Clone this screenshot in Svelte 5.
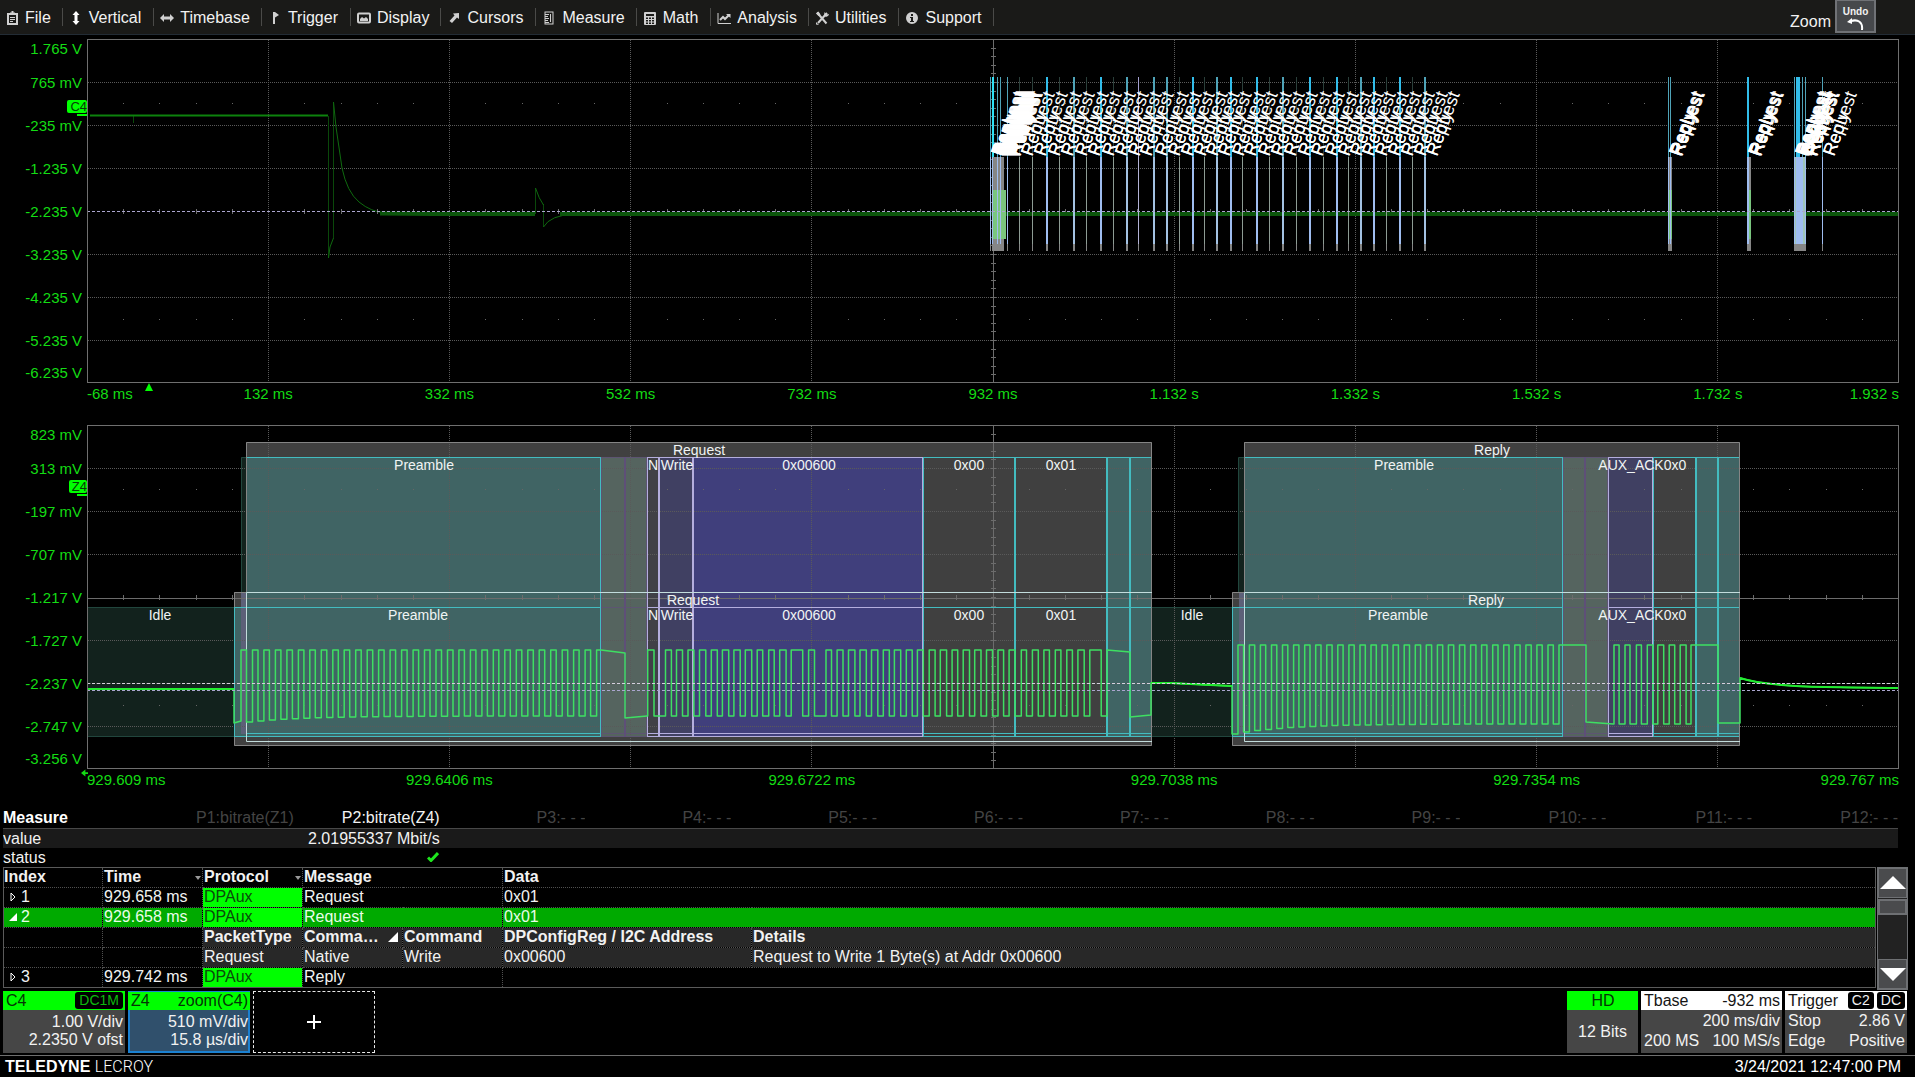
<script>
  const X0 = 87, W = 1812, H = 344, TOP1 = 39, TOP2 = 425;
  const px = (x) => `${((x - X0) / W) * 100}%`;

  const menu = ['File', 'Vertical', 'Timebase', 'Trigger', 'Display', 'Cursors', 'Measure', 'Math', 'Analysis', 'Utilities', 'Support'];

  const volts1 = ['1.765 V', '765 mV', '-235 mV', '-1.235 V', '-2.235 V', '-3.235 V', '-4.235 V', '-5.235 V', '-6.235 V'];
  const times1 = ['-68 ms', '132 ms', '332 ms', '532 ms', '732 ms', '932 ms', '1.132 s', '1.332 s', '1.532 s', '1.732 s', '1.932 s'];
  const volts2 = ['823 mV', '313 mV', '-197 mV', '-707 mV', '-1.217 V', '-1.727 V', '-2.237 V', '-2.747 V', '-3.256 V'];
  const times2 = ['929.609 ms', '929.6406 ms', '929.6722 ms', '929.7038 ms', '929.7354 ms', '929.767 ms'];

  const cols = [1, 2, 3, 4, 6, 7, 8, 9].map((i) => Math.round(i * 181.1) + 0.5);
  const rows = [1, 2, 3, 5, 6, 7].map((i) => i * 43 + 0.5);
  const minor = Array.from({ length: 49 }, (_, i) => i + 1).filter((i) => i % 5).map((i) => Math.round(i * 36.22));
  const vticks = Array.from({ length: 39 }, (_, i) => Math.round((i + 1) * 8.6) + 0.5);

  // packets in the full acquisition: position and strength (b bright, m medium, d dim, l lilac)
  const packets = [
    [1020, 'd'], [1033, 'd'], [1047, 'b'], [1060, 'd'], [1074, 'm'], [1087, 'd'], [1101, 'b'], [1114, 'd'], [1127, 'm'],
    [1139, 'l'], [1154, 'm'], [1167, 'm'], [1180, 'd'], [1193, 'b'], [1205, 'd'], [1217, 'm'], [1231, 'b'], [1243, 'd'],
    [1257, 'b'], [1270, 'd'], [1283, 'm'], [1297, 'd'], [1310, 'b'], [1324, 'd'], [1337, 'b'], [1349, 'd'], [1361, 'm'],
    [1374, 'b'], [1387, 'd'], [1400, 'b'], [1413, 'd'], [1425, 'm']
  ].map(([x, kind]) => ({ x, kind, w: kind === 'b' || kind === 'm' ? 2 : 1 }));

  const tags = [
    ...Array.from({ length: 19 }, (_, i) => 990 + i),
    ...packets.map((p) => p.x),
    1668, 1669, 1670, 1747, 1748, 1749, 1794, 1795, 1796, 1797, 1799, 1803, 1804, 1805, 1822
  ];

  const thin = [990, 997, 1000, 1007, 1668, 1670, 1794, 1802, 1805, 1822];

  const fields = [
    { x: 246, w: 355, kind: 'teal' }, { x: 601, w: 46, kind: 'sync' },
    { x: 647, w: 12, kind: 'native' }, { x: 659, w: 34, kind: 'cmd' }, { x: 693, w: 230, kind: 'addr' },
    { x: 923, w: 92, kind: 'data' }, { x: 1015, w: 92, kind: 'data' },
    { x: 1107, w: 23, kind: 'teal' }, { x: 1130, w: 22, kind: 'teal' },
    { x: 1244, w: 319, kind: 'teal' }, { x: 1563, w: 45, kind: 'sync' },
    { x: 1608, w: 45, kind: 'cmd' }, { x: 1653, w: 43, kind: 'data' },
    { x: 1696, w: 22, kind: 'teal' }, { x: 1718, w: 22, kind: 'teal' }
  ];
  const frames = [{ x: 246, left: 234, right: 1152 }, { x: 1244, left: 1232, right: 1740 }];

  const captions = [
    { t: 'Request', x: 699, y: 450 }, { t: 'Request', x: 693, y: 600 },
    { t: 'Reply', x: 1492, y: 450 }, { t: 'Reply', x: 1486, y: 600 },
    { t: 'Preamble', x: 424, y: 465 }, { t: 'Preamble', x: 418, y: 615 },
    { t: 'Preamble', x: 1404, y: 465 }, { t: 'Preamble', x: 1398, y: 615 },
    { t: 'Idle', x: 160, y: 615 }, { t: 'Idle', x: 1192, y: 615 },
    ...[465, 615].flatMap((y) => [
      { t: 'N', x: 653, y }, { t: 'Write', x: 677, y }, { t: '0x00600', x: 809, y }, { t: '0x00', x: 969, y },
      { t: '0x01', x: 1061, y }, { t: 'AUX_ACK', x: 1631, y }, { t: '0x0', x: 1675, y }
    ])
  ];

  function burst(start, period, count, high, low, settle) {
    let d = '';
    for (let k = 0; k < count; k++) {
      const a = start + k * period;
      const y = low + settle * Math.exp(-k / 5);
      d += `V${high}H${(a + period * 0.48).toFixed(1)}V${y.toFixed(1)}H${(a + period).toFixed(1)}`;
    }
    return d;
  }
  const pulses = (list, high, low) => list.map(([a, b]) => `H${a}V${high}H${b}V${low}`).join('');

  const requestBits = [
    [70, 86], [115, 130], [143, 158], [172, 187], [201, 217], [231, 246], [259, 275], [288, 304], [317, 333], [347, 361],
    [376, 390], [404, 420], [433, 462], [477, 492], [521, 535], [549, 564], [578, 594], [607, 623], [636, 652], [666, 681],
    [694, 710], [724, 739], [752, 767], [782, 797], [810, 826], [840, 854], [868, 884], [897, 913], [927, 942], [956, 970],
    [984, 999], [1015, 1028], [1043, 1058], [1072, 1086], [1101, 1115], [1130, 1144], [1158, 1174], [1188, 1217]
  ].map((p) => p.map((v) => +(620 + v / 2.529).toFixed(1)));
  const replyBits = [[908, 919], [932, 943], [957, 968], [981, 993], [1004, 1017], [1029, 1041], [1053, 1066]]
    .map((p) => p.map((v) => +(1200 + v / 2.193).toFixed(1)));

  const wave =
    'M87 689H234V723L241 721' + burst(241, 11.47, 31, 650, 716, 6) +
    'V650H601L625 653V718L647 716' + pulses(requestBits, 650, 716) +
    'H1107V650L1130 652V717L1151 715V683L1170 683L1210 685L1232 686V734H1238' +
    burst(1238.3, 11.06, 29, 645, 724, 8) +
    'V645H1586V722L1613 724' + pulses(replyBits, 645, 724) +
    'H1691V645H1718V723H1740V678Q1765 686 1825 687T1899 688';

  const params = ['P1:bitrate(Z1)', 'P2:bitrate(Z4)', ...Array.from({ length: 10 }, (_, i) => `P${i + 3}:- - -`)];
</script>

{#snippet icon(name)}
  <svg class="icon" viewBox="0 0 14 14" aria-hidden="true">
    {#if name === 'File'}
      <path d="M3 3h9v10H3z" class="ln heavy" /><path d="M5 3V1.500h1.500V0h2v1.500H10V3z" /><path d="M5 6.500h5M5 8.500h5M5 10.500h3" class="ln" />
    {:else if name === 'Vertical'}
      <path class="lit" d="M7 0l3.500 4H8.500v6h2L7 14l-3.500-4h2V4h-2z" />
    {:else if name === 'Timebase'}
      <path d="M0 7l4-4v2.500h6V3l4 4-4 4V8.500H4V11z" />
    {:else if name === 'Trigger'}
      <path d="M5 1h2v12H5zM7 1l4 3-4 2.500z" />
    {:else if name === 'Display'}
      <rect x="1" y="2.500" width="12" height="9" rx="1" class="ln heavy" /><path d="M3 10V8l2-2 2 1.500L9 6l2 2v2z" />
    {:else if name === 'Cursors'}
      <path d="M12 2v6L10 6.500 5 12 2.500 10l5-5.500L6 2.500z" />
    {:else if name === 'Measure'}
      <rect x="3" y="1" width="8" height="12" class="ln" /><path d="M3 3.500h4M3 5.500h3M3 7.500h4M3 9.500h3M3 11.500h4M8.500 3v8" class="ln" />
    {:else if name === 'Math'}
      <path fill-rule="evenodd" d="M2 1h10a1 1 0 011 1v11a1 1 0 01-1 1H2a1 1 0 01-1-1V2a1 1 0 011-1zM3 3v2h8V3zM3 6.500v1.500h2V6.500zM6 6.500v1.500h2V6.500zM9 6.500v1.500h2V6.500zM3 9v1.500h2V9zM6 9v1.500h2V9zM9 9v1.500h2V9zM3 11.500V13h2v-1.500zM6 11.500V13h2v-1.500zM9 11.500V13h2v-1.500z" />
    {:else if name === 'Analysis'}
      <path d="M1 2v10.500h13" class="ln" /><path d="M3 9l3-3 2 2 4-4" class="ln heavy" /><path d="M9 3h4.500v4z" />
    {:else if name === 'Utilities'}
      <path d="M2 1.500l9.500 11M12 2L3 12" class="ln fat" /><path d="M1 2.500l2.500-2 2 3-2 1.500zM9.500 1l2 2.500L14 3a3 3 0 01-5 2zM1 11l3 3-3-.5z" />
    {:else}
      <path fill-rule="evenodd" d="M7 1a6 6 0 100 12A6 6 0 007 1zM6 3h2v2H6zM5 6h3v4h1v1H5v-1h1V7H5z" />
    {/if}
  </svg>
{/snippet}

{#snippet grid()}
  <g class="grid">
    {#each cols as x}<line x1={x} x2={x} y1="1" y2={H} />{/each}
    {#each rows as y}<line x1="1" x2={W} y1={y} y2={y} />{/each}
  </g>
  <g class="dots">
    {#each minor as x}<rect {x} y="64" width="1" height="1" /><rect {x} y="280" width="1" height="1" />{/each}
  </g>
  <g class="axis">
    <line x1="906.5" x2="906.5" y1="0" y2={H} />
    {#each vticks as y}<line x1="904" x2="909" y1={y} y2={y} />{/each}
    {#each minor as x}<line x1={x + 0.5} x2={x + 0.5} y1="170" y2="175" />{/each}
  </g>
{/snippet}

<div class="scope">
  <nav class="menu">
    {#each menu as name}
      <button>{@render icon(name)}<span>{name}</span></button>
    {/each}
    <span class="zoom">Zoom</span>
    <button class="undo">Undo
      <svg viewBox="0 0 20 12" aria-hidden="true"><path d="M5 3C12 1 17 4 16 12" /><path class="head" d="M1 4l5-4v6z" /></svg>
    </button>
  </nav>

  <section class="panel">
    <div class="volts">{#each volts1 as v}<span>{v}</span>{/each}<b class="chan c4">C4</b></div>
    <div class="plot">
      <svg viewBox="0 0 {W} {H}" preserveAspectRatio="none" aria-label="C4 acquisition">
        {@render grid()}
        <g transform="translate({-X0} {-TOP1})">
          <path class="trace1 faint" d="M133.500 116V123M328.500 116V258M333.500 238V102M535.500 214V188M543.500 204V227" />
          <path class="trace1 thin" d="M328.500 258L330 247L333.500 238M333.500 102L336 127L342 168Q347 192 359 202T386 213M535.500 188Q539 199 543.500 205M543.500 227Q550 215 575 214" />
          <path class="trace1" d="M90 115.500H328" />
          <path class="trace1 wide" d="M380 213.500L433 214H535M560 214H1899" />
          <rect class="hazegrey" x="992" y="157" width="12" height="94" />
          <rect class="hazegreen" x="993" y="190" width="13" height="49" />
          <rect class="hazegrey" x="1668" y="157" width="4" height="94" />
          <rect class="hazegreen" x="1669" y="190" width="3" height="49" />
          <rect class="hazegrey" x="1747" y="157" width="4" height="94" />
          <rect class="hazegreen" x="1749" y="190" width="2" height="49" />
          <rect class="hazegrey" x="1794" y="157" width="12" height="94" />
          <rect class="hazemint" x="1794" y="157" width="12" height="87" />
          <rect class="b-low" x="1796" y="157" width="6" height="87" />
          <rect class="b-top" x="1796" y="77" width="4" height="80" />
          <rect class="b-top" x="1747" y="77" width="2" height="80" />
          <rect class="b-low" x="1747" y="157" width="2" height="87" />
          <rect class="core" x="992" y="77" width="2" height="80" />
          <rect class="b-low" x="992" y="157" width="1" height="87" />
          {#each thin as x}
            <rect class="m-top" {x} y="77" width="1" height="80" />
            <rect class="b-low" {x} y="157" width="1" height="87" />
            <rect class="hazegrey" {x} y="244" width="1" height="7" />
          {/each}
          {#each packets as p}
            <rect class="{p.kind}-top" x={p.x - 1} y="77" width={p.w} height="80" />
            <rect class="{p.kind}-low" x={p.x - 1} y="157" width={p.w} height="87" />
            <rect class="hazegrey" x={p.x - 1} y="244" width={p.w} height="7" />
          {/each}
          <line class="level" x1="87" x2="1899" y1="211.500" y2="211.500" />
        </g>
        <rect class="edge" x="0.500" y="0.500" width={W - 1} height={H - 1} />
      </svg>
      {#each tags as x}
        <span class="tag" style:left={px(x + 12)}>Request</span>
        <span class="tag" style:left={px(x + 12)}>Reply</span>
      {/each}
    </div>
    <div class="times eleven">{#each times1 as t}<span>{t}</span>{/each}
      <svg class="trig" viewBox="0 0 8 8" aria-hidden="true"><path d="M4 0l4 8H0z" /></svg>
    </div>
  </section>

  <section class="panel second">
    <div class="volts">{#each volts2 as v}<span>{v}</span>{/each}<b class="chan z4">Z4</b></div>
    <div class="plot">
      <svg viewBox="0 0 {W} {H}" preserveAspectRatio="none" aria-label="Z4 zoom">
        <g transform="translate({-X0} {-TOP2})">
          <rect class="idle" x="87" y="607" width="147" height="130" />
          <rect class="idle" x="1152" y="607" width="80" height="130" />
          {#each frames as f}
            <rect class="idle" x={f.left + 7} y="457" width="5" height="150" />
            <rect class="outer" x={f.x} y="442" width={f.right - f.x} height="304" />
            <rect class="outer" x={f.left} y="592" width={f.right - f.left} height="154" />
            <rect class="teal" x={f.left} y="607" width="12" height="130" />
            <rect class="mauve" x={f.left + 7} y="592" width="5" height="142" />
          {/each}
          {#each fields as f}<rect class={f.kind} x={f.x} y="457" width={f.w} height="280" />{/each}
        </g>
        {@render grid()}
        <line class="mid" x1="0" x2={W} y1="173.500" y2="173.500" />
        <g transform="translate({-X0} {-TOP2})">
          {#each fields as f}
            <path class="{f.kind}-line" d="M{f.x + 0.5} 457V737M{f.x + f.w - 0.5} 457V737M{f.x} 457.500h{f.w}M{f.x} 607.500h{f.w}M{f.x} 733.500h{f.w}M{f.x} 736.500h{f.w}" />
          {/each}
          <path class="purple" d="M625 457V737M1585 457V737" />
          <path class="idle-line" d="M87 607.500H234M87 736.500H234M1152 607.500H1232M1152 736.500H1232M241.500 592V457.500H246M1238.500 592V457.500H1244" />
          {#each frames as f}
            <path class="frame soft" d="M{f.x + 0.5} 592V442.500H{f.right - 0.5}V745.500H{f.left + 0.5}V592.500H{f.x}" />
            <path class="frame" d="M{f.right} 592.500H{f.x + 0.5}V741.500H{f.right}" />
            <path class="teal-line" d="M{f.left + 0.5} 607V737M{f.left} 607.500h12M{f.left} 736.500h12" />
          {/each}
          <path class="wave" d={wave} />
          <path class="wave flat" d="M87 689H234M1151 683L1170 683L1210 685L1232 686M1740 678Q1765 686 1825 687T1899 688" />
          <line class="cursor" x1="87" x2="1899" y1="683.500" y2="683.500" />
          <line class="level" x1="87" x2="1899" y1="690.500" y2="690.500" />
        </g>
        <rect class="edge" x="0.500" y="0.500" width={W - 1} height={H - 1} />
      </svg>
      {#each captions as c}
        <span class="caption" style:left={px(c.x)} style:top="{c.y - TOP2}px">{c.t}</span>
      {/each}
    </div>
    <div class="times six">{#each times2 as t}<span>{t}</span>{/each}
      <svg class="back" viewBox="0 0 8 8" aria-hidden="true"><path d="M0 4l5-4v3h3v2H5v3z" /></svg>
    </div>
  </section>

  <table class="measure">
    <thead>
      <tr><th class="name">Measure</th>{#each params as p, i}<th class:on={i === 1}>{p}</th>{/each}</tr>
    </thead>
    <tbody>
      <tr class="value"><td>value</td><td></td><td class="num">2.01955337 Mbit/s</td><td colspan="10"></td></tr>
      <tr><td>status</td><td></td><td class="num"><svg class="tick" viewBox="0 0 12 10" aria-label="ok"><path d="M1 5.500l3 3L11 1" /></svg></td><td colspan="10"></td></tr>
    </tbody>
  </table>

  <div class="decode">
    <table>
      <colgroup><col class="c1" /><col class="c2" /><col class="c2" /><col class="c2" /><col class="c2" /><col class="c3" /><col /></colgroup>
      <thead>
        <tr><th>Index</th><th>Time<i class="down"></i></th><th>Protocol<i class="down"></i></th><th colspan="2">Message</th><th colspan="2">Data</th></tr>
      </thead>
      <tbody>
        <tr><td><svg class="exp" viewBox="0 0 8 10" aria-hidden="true"><path class="hollow" d="M2 1v8l4-4z" /></svg>1</td><td>929.658 ms</td><td class="proto">DPAux</td><td colspan="2">Request</td><td colspan="2">0x01</td></tr>
        <tr class="selected"><td><svg class="exp" viewBox="0 0 8 10" aria-hidden="true"><path d="M8 1v8H0z" /></svg>2</td><td>929.658 ms</td><td class="proto">DPAux</td><td colspan="2">Request</td><td colspan="2">0x01</td></tr>
        <tr class="sub"><td></td><td></td><th>PacketType</th><th>Comma…<i class="corner"></i></th><th>Command</th><th>DPConfigReg / I2C Address</th><th>Details</th></tr>
        <tr class="sub"><td></td><td></td><td>Request</td><td>Native</td><td>Write</td><td>0x00600</td><td>Request to Write 1 Byte(s) at Addr 0x00600</td></tr>
        <tr><td><svg class="exp" viewBox="0 0 8 10" aria-hidden="true"><path class="hollow" d="M2 1v8l4-4z" /></svg>3</td><td>929.742 ms</td><td class="proto">DPAux</td><td colspan="2">Reply</td><td colspan="2"></td></tr>
      </tbody>
    </table>
    <div class="scroll">
      <button aria-label="Scroll up"><svg viewBox="0 0 26 14" aria-hidden="true"><path d="M13 0l13 13H0z" /></svg></button>
      <div class="thumb"></div>
      <div class="track"></div>
      <button aria-label="Scroll down"><svg viewBox="0 0 26 14" aria-hidden="true"><path d="M13 14L0 1h26z" /></svg></button>
    </div>
  </div>

  <div class="boxes">
    <button class="box trace">
      <span class="head"><span>C4</span><span class="pill green">DC1M</span></span>
      <span class="line end">1.00 V/div</span><span class="line end">2.2350 V ofst</span>
    </button>
    <button class="box trace active">
      <span class="head"><span>Z4</span><span>zoom(C4)</span></span>
      <span class="line end">510 mV/div</span><span class="line end">15.8 µs/div</span>
    </button>
    <button class="add" aria-label="Add new"><svg viewBox="0 0 14 14" aria-hidden="true"><path d="M7 0v14M0 7h14" /></svg></button>
    <button class="box hd"><span class="head">HD</span><span class="bits">12 Bits</span></button>
    <button class="box wide tbase">
      <span class="head"><span>Tbase</span><span>-932 ms</span></span>
      <span class="line end">200 ms/div</span><span class="line"><span>200 MS</span><span>100 MS/s</span></span>
    </button>
    <button class="box wide trigger">
      <span class="head"><span>Trigger</span><span class="pills"><span class="pill">C2</span><span class="pill">DC</span></span></span>
      <span class="line"><span>Stop</span><span>2.86 V</span></span><span class="line"><span>Edge</span><span>Positive</span></span>
    </button>
  </div>

  <footer><span class="brand"><b>TELEDYNE</b> <span>LECROY</span></span><time>3/24/2021 12:47:00 PM</time></footer>
</div>

<style>
  :global(body) { margin: 0; background: #000; }
  .scope { font: 16px/20px "Liberation Sans", Arial, sans-serif; color: #f2f2f2; background: #000; overflow: hidden; }
  button { font: inherit; color: inherit; border: 0; margin: 0; padding: 0; background: none; border-radius: 0; text-align: left; }
  svg { display: block; }

  .menu { display: flex; height: 34px; background: #1a1a18; border-bottom: 1px solid #232c35; }
  .menu button { display: flex; align-items: center; gap: 6px; padding: 1px 12px 0 6px; position: relative; }
  .menu button:first-child { padding-left: 5px; }
  .menu button:not(.undo)::after { content: ""; width: 1px; height: 18px; background: #4a4a48; position: absolute; right: 0; top: 8px; }
  .menu button:nth-child(even) span { padding-right: 1px; }
  .icon { width: 14px; height: 14px; fill: #d0d0d0; }
  .icon .lit { fill: #fff; }
  .icon .ln { fill: none; stroke: #d0d0d0; stroke-width: 1; }
  .icon .heavy, .icon .fat { stroke-width: 2; }
  .menu .zoom { margin-left: auto; align-self: flex-end; padding: 0 4px 2px 0; }
  .menu .undo { flex-direction: column; justify-content: center; gap: 0; box-sizing: border-box; width: 41px; height: 33px; margin-right: 39px; padding: 4px 0 0; border: 2px solid #707276; border-top-width: 1px; background: #46484b; font-size: 10px; line-height: 12px; font-weight: bold; }
  .undo svg { width: 20px; height: 12px; }
  .undo path { fill: none; stroke: #fff; stroke-width: 2; }
  .undo .head { fill: #fff; stroke: none; }

  .panel { display: grid; grid-template-columns: 87px minmax(0, 1fr) 16px; grid-template-rows: 344px 22px; margin-top: 4px; color: #14dc14; font-size: 15px; }
  .second { margin-top: 20px; }
  .volts { display: grid; grid-template-rows: 1fr repeat(7, 2fr) 1fr; align-items: center; justify-items: end; padding-right: 5px; margin: 1px 0 -1px; position: relative; line-height: 18px; white-space: nowrap; }
  .volts span:first-child { align-self: start; }
  .chan { position: absolute; right: 0; width: 20px; height: 13px; border-radius: 2px; background: #0f0; color: #063906; font: 13px/14px "Liberation Sans", Arial, sans-serif; text-align: right; }
  .chan::after { content: ""; position: absolute; right: 0; top: 14px; width: 10px; height: 2px; background: #0f0; }
  .c4 { top: 60px; }
  .z4 { top: 54px; width: 18px; }
  .plot { position: relative; }
  .plot > svg { width: 100%; height: 100%; }
  .times { grid-column: 2; display: grid; align-items: center; justify-items: center; position: relative; white-space: nowrap; line-height: 22px; }
  .times span { width: 0; display: flex; justify-content: center; }
  .times span:first-child { justify-self: start; justify-content: flex-start; }
  .times span:nth-last-child(2) { justify-self: end; justify-content: flex-end; }
  .eleven { grid-template-columns: 1fr repeat(9, 2fr) 1fr; }
  .six { grid-template-columns: 1fr repeat(4, 2fr) 1fr; }
  .trig { position: absolute; left: 58px; top: 0; width: 8px; height: 8px; fill: #0f0; }
  .back { position: absolute; left: -6px; top: 0; width: 7px; height: 8px; fill: #14dc14; }

  .grid line { stroke: #5a5a5a; stroke-dasharray: 1 1; shape-rendering: crispEdges; }
  .dots rect { fill: #666; }
  .axis line, .mid { stroke: #6c6c6c; }
  .edge { fill: none; stroke: #6f6f6f; }
  .trace1 { fill: none; stroke: #0d820d; stroke-width: 2; }
  .thin { stroke-width: 1; stroke: #0f6a0f; }
  .faint { stroke-width: 1; stroke: #0a480a; }
  .wide { stroke-width: 4; stroke: #0c560c; }
  .level { stroke: #aba6cf; stroke-dasharray: 3 2; }
  .cursor { stroke: #d4cfdc; stroke-dasharray: 3 2; }
  .hazegrey { fill: #868686; }
  .hazegreen { fill: #7ac67e; }
  .hazemint { fill: #9fc6b8; }
  .core { fill: #2fe0f4; }
  .b-top { fill: #32bdea; }
  .b-low { fill: #9fbdf0; }
  .m-top { fill: #4fa3b8; }
  .m-low { fill: #a3c2e2; }
  .d-top { fill: #2b3f3a; }
  .d-low { fill: #8d9c94; }
  .l-top { fill: #a4a0d0; }
  .l-low { fill: #b3b3d6; }
  .tag { position: absolute; top: 102px; color: #fff; font-size: 18px; line-height: 20px; transform-origin: 0 16px; transform: rotate(-70deg); }

  .idle { fill: #12221d; }
  .outer, .data { fill: #404040; }
  .teal { fill: #406464; }
  .mauve { fill: #5c6078; }
  .sync { fill: #55645f; }
  .native { fill: #404047; }
  .cmd { fill: #404062; }
  .addr { fill: #403f7c; }
  .plot path { fill: none; }
  .teal-line, .data-line { stroke: #43bcc0; }
  .sync-line { stroke: #5d5572; }
  .native-line, .cmd-line, .addr-line { stroke: #b4aede; }
  .purple { stroke: #5e4f78; stroke-width: 2; }
  .idle-line { stroke: #21463d; }
  .frame { stroke: #c2dcdc; }
  .soft { stroke: #858585; }
  .wave { stroke: #3edf62; stroke-width: 1.5px; stroke-linejoin: round; }
  .flat { stroke: #22ec30; stroke-width: 2; }
  .caption { position: absolute; transform: translate(-50%, -50%); color: #f0f4f4; font-size: 14px; line-height: 16px; }

  table { border-collapse: collapse; table-layout: fixed; }
  th, td { padding: 0; text-align: left; white-space: nowrap; overflow: hidden; }
  .measure { width: calc(100% - 20px); margin: 17px 17px 0 3px; }
  .measure tr { height: 20px; }
  .measure th { font-weight: normal; text-align: right; color: #444; padding: 0; line-height: 19px; border-bottom: 1px solid #484848; }
  .measure .name { width: 145px; font-weight: bold; text-align: left; color: #fff; }
  .measure .on { color: #f2f2f2; }
  .measure td { line-height: 19px; vertical-align: top; }
  .value { background: #1a1a1a; }
  .num { text-align: right; }
  .tick { width: 12px; height: 10px; margin: 4px 1px 0 auto; }
  .tick path { fill: none; stroke: #1ee61e; stroke-width: 3; }

  .decode { display: flex; align-items: flex-start; margin: -1px 7px 0 3px; }
  .decode table { flex: 1; width: 100%; border: 1px solid #5a5a5a; }
  .decode th, .decode td { box-sizing: border-box; height: 20px; line-height: 18px; vertical-align: top; padding-left: 1px; border: 1px dotted #505050; position: relative; }
  .decode th:first-child, .decode td:first-child { padding-left: 0; border-left-color: #5a5a5a; }
  .c1 { width: 99px; }
  .c2 { width: 100px; }
  .c3 { width: 249px; }
  .exp { display: inline-block; width: 8px; height: 10px; margin: 0 4px 2px 5px; vertical-align: middle; fill: #fff; }
  .hollow { fill: none; stroke: #fff; }
  .down { position: absolute; right: 1px; top: 8px; border: 3px solid transparent; border-top: 4px solid #999; border-bottom: 0; }
  .corner { position: absolute; right: 4px; top: 4px; border: 5px solid; border-color: transparent #fff #fff transparent; }
  .proto { background: #0f0; color: #0b4a0b; }
  .selected { background: #0a0; color: #e8ffe8; }
  .sub th, .sub td:nth-child(n + 3) { background: #282828; }
  .scroll { display: flex; flex-direction: column; box-sizing: border-box; width: 31px; height: 123px; border: 1px solid #6e7073; background: #222; margin-left: 1px; flex-shrink: 0; }
  .scroll button { display: grid; place-items: center; height: 30px; box-sizing: border-box; border: 1px solid #6e7073; background: #4a4b4d; }
  .scroll svg { width: 26px; height: 14px; fill: #fff; }
  .thumb { box-sizing: border-box; height: 16px; margin-top: 1px; border: 2px solid #6e7073; background: #4a4b4d; }
  .track { flex: 1; }

  .boxes { display: flex; gap: 3px; padding: 0 8px 0 3px; margin-top: 1px; height: 62px; }
  .box { display: flex; flex-direction: column; box-sizing: border-box; width: 122px; background: #464646; line-height: 18px; }
  .box .head { display: flex; justify-content: space-between; align-items: center; height: 19px; padding: 0 2px 0 3px; background: #0f0; color: #063306; }
  .trace .head { margin-bottom: 3px; }
  .line { display: flex; justify-content: space-between; padding: 0 2px 0 3px; }
  .end { justify-content: flex-end; }
  .active { background: #30506c; box-shadow: inset 0 0 0 2px #1b80d0; }
  .active .head { box-shadow: inset 0 1px 0 #1b80d0; }
  .pill { padding: 0 4px; border-radius: 3px; background: #000; color: #f2f2f2; font-size: 14px; line-height: 17px; }
  .green { color: #0fb80f; }
  .pills { display: flex; gap: 3px; }
  .add { display: grid; place-items: center; width: 122px; box-sizing: border-box; border: 1px dashed #e8e8e8; }
  .add svg { width: 14px; height: 14px; stroke: #fff; stroke-width: 2; }
  .hd { width: 71px; margin-left: auto; }
  .box.hd .head { justify-content: center; }
  .bits { margin: auto; }
  .wide { line-height: 20px; }
  .wide .head { background: #fff; color: #141414; margin-bottom: 1px; }
  .tbase { width: 141px; }
  .trigger { width: 122px; }

  footer { display: flex; justify-content: space-between; margin-top: 2px; border-top: 1px solid #6e6e6e; padding: 0 14px 0 5px; height: 20px; line-height: 21px; color: #fff; }
  .brand span { font-family: Roboto, sans-serif; font-weight: 300; }
</style>
